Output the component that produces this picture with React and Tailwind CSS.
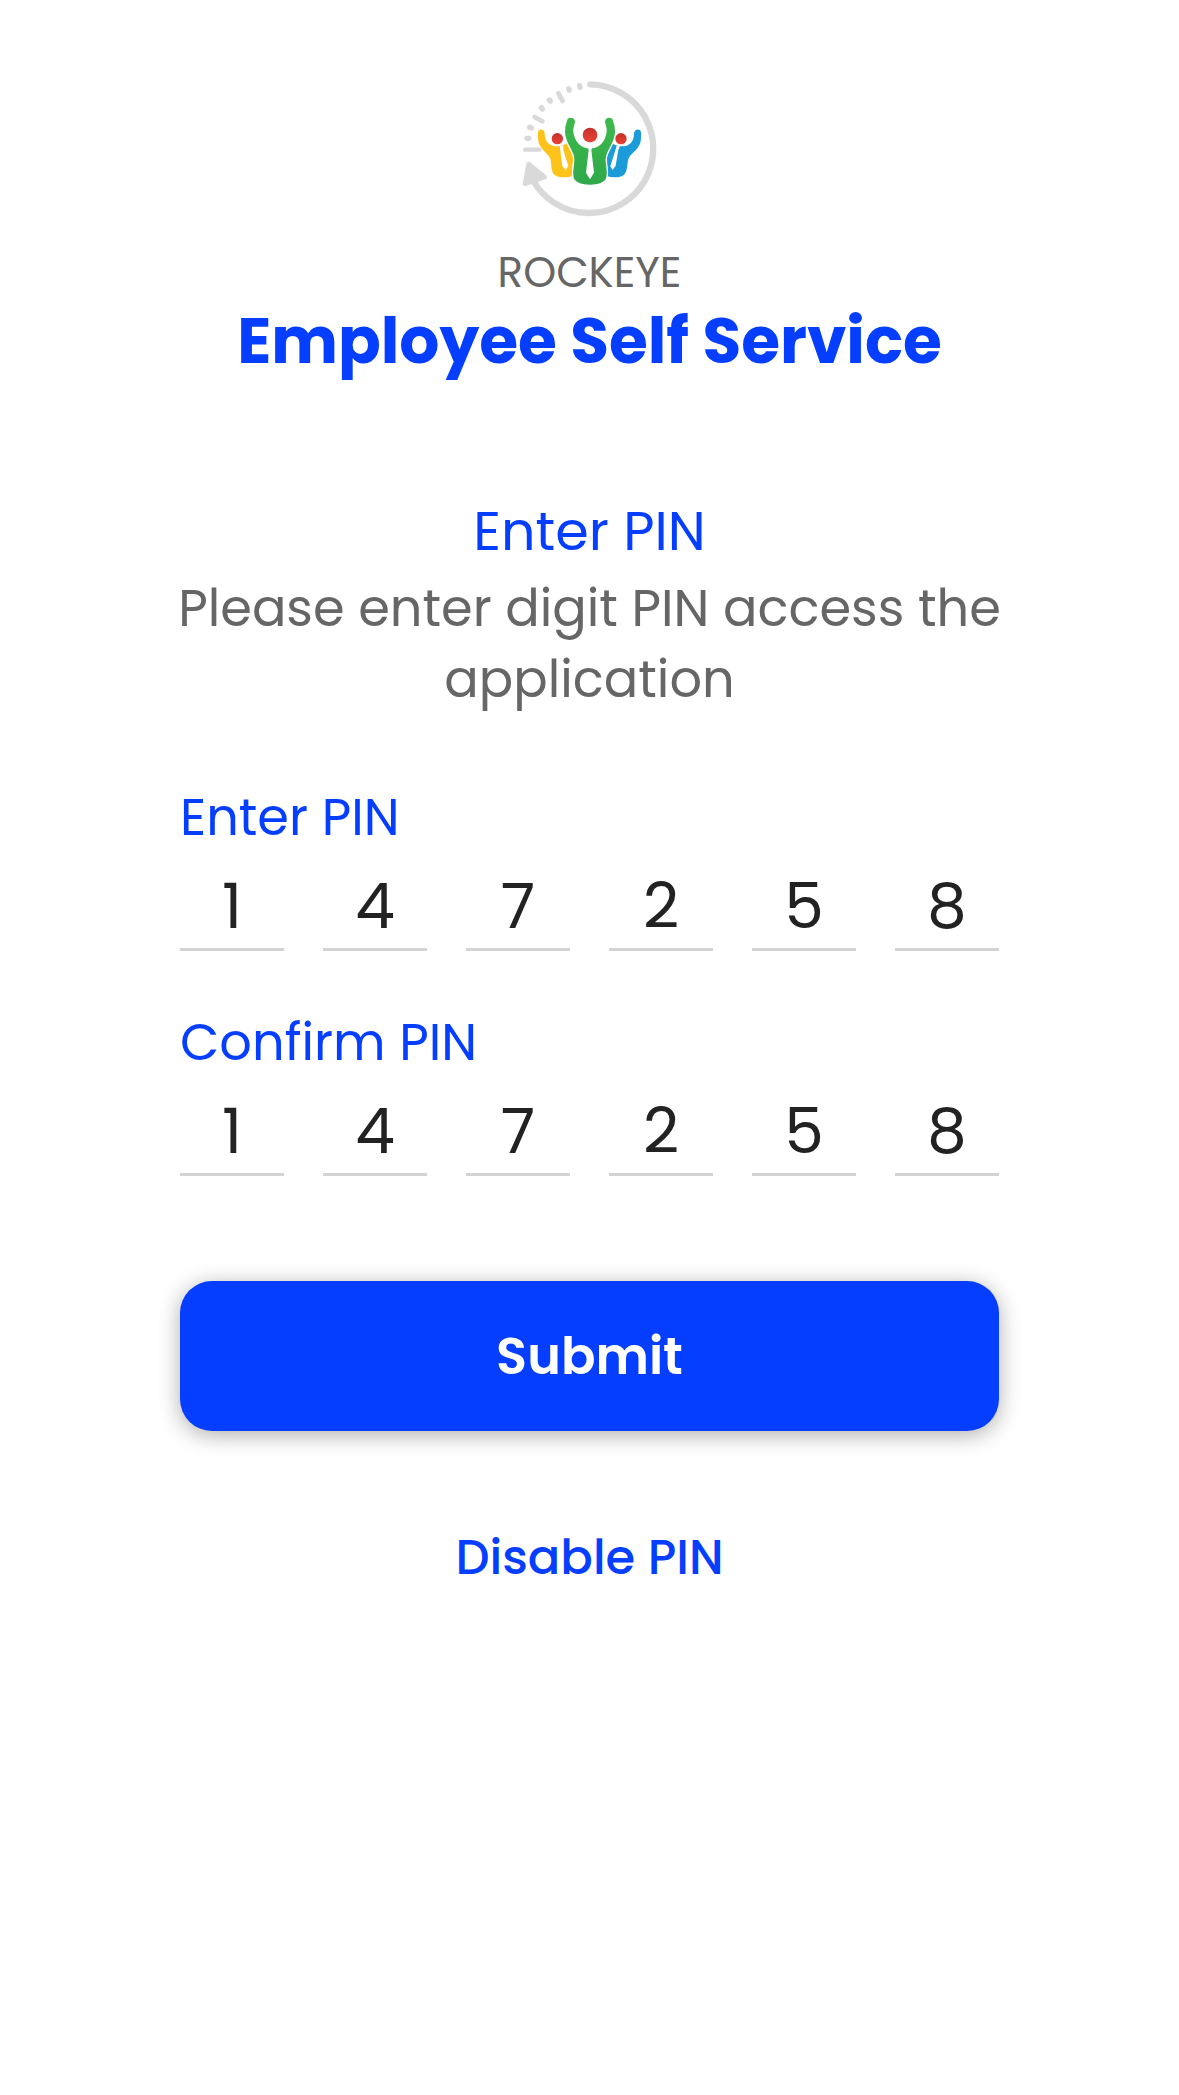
import { useState } from 'react'

const PIN = ['1', '4', '7', '2', '5', '8']

function Logo() {
  return (
    <svg viewBox="0 0 480 465" className="w-[160px] h-[155px]" fill="none" aria-hidden="true">
      <defs>
        <linearGradient id="red" x1="0" y1="0" x2="0" y2="1">
          <stop offset="0" stopColor="#c4302b" />
          <stop offset="1" stopColor="#ea4335" />
        </linearGradient>
        <linearGradient id="green" x1="0" y1="0" x2="0" y2="1">
          <stop offset="0" stopColor="#3fb94c" />
          <stop offset="1" stopColor="#2fa84a" />
        </linearGradient>
      </defs>

      {/* clock ring */}
      <g stroke="#d9d9d9" strokeLinecap="round">
        <path d="M241 43A193 193 0 1 1 70 333" strokeWidth="19" />
        <path d="M46 239H88" strokeWidth="13" />
        <path d="M74 141L97 154M145 70L158 93" strokeWidth="14" />
        <path d="M51 205H56M59 172L64 174M94 113L97 117M118 90L121 93M176 56L178 60M209 47L210 52" strokeWidth="16" />
      </g>
      <path d="M56 282L104 321L45 341Z" fill="#d9d9d9" stroke="#d9d9d9" strokeWidth="14" strokeLinejoin="round" />

      {/* left */}
      <path
        d="M84 189C83 175 104 175 104 190C104 207 111 222 127 227C142 231 160 229 170 220C182 228 190 246 191 264C187 280 187 301 189 317C172 324 145 324 133 314C121 304 126 281 120 265C114 247 84 238 84 204Z"
        fill="#fdc31b"
      />
      <path d="M149 228L160 227L160 240L175 288L167 300L157 288Z" fill="#fff" />
      {/* right */}
      <path
        d="M393 189C394 175 373 175 372 190C372 207 366 222 350 227C335 231 317 229 307 220C296 228 289 246 287 264C292 280 292 301 289 317C306 324 331 324 342 314C354 304 350 281 356 265C363 247 393 238 393 204Z"
        fill="#1b9bd8"
      />
      <path d="M320 228L330 228L325 240L317 287L308 300L301 289Z" fill="#fff" />
      {/* middle */}
      <path
        d="M169 152C171 138 193 137 197 153C198 162 190 171 192 185C195 213 213 233 240 233C267 233 285 213 288 185C290 171 282 162 283 153C287 137 309 138 311 152C315 161 318 171 317 187C316 221 290 242 289 266C288 289 298 310 289 328C276 352 204 352 191 328C182 310 192 289 191 266C190 242 164 221 163 187C162 171 165 161 169 152Z"
        fill="url(#green)"
        stroke="#fff"
        strokeWidth="4"
      />
      <path d="M233 230H247L244 240L252 308L240 328L228 308L236 240Z" fill="#fff" />

      <circle cx="142" cy="206" r="17" fill="url(#red)" />
      <circle cx="333" cy="206" r="17" fill="url(#red)" />
      <circle cx="240" cy="195" r="22" fill="url(#red)" />
    </svg>
  )
}

function PinField({ id, label, value, onChange }) {
  const setDigit = (i, digit) => {
    onChange(value.map((d, n) => (n === i ? digit : d)))
  }

  return (
    <div>
      <label htmlFor={`${id}-0`} className="block text-[51px] leading-[56px] text-[#053eff]">
        {label}
      </label>
      <div className="mt-[18px] grid grid-cols-6 gap-[39px]">
        {value.map((d, i) => (
          <input
            key={i}
            id={`${id}-${i}`}
            aria-label={i === 0 ? undefined : `${label} ${i + 1}`}
            inputMode="numeric"
            maxLength={1}
            value={d}
            onChange={e => setDigit(i, e.target.value)}
            className="w-full h-[88px] border-b-3 border-[#d3d3d3] bg-transparent pt-px text-center text-[63px] text-[#222222] outline-none"
          />
        ))}
      </div>
    </div>
  )
}

export default function App() {
  const [pin, setPin]         = useState(PIN)
  const [confirm, setConfirm] = useState(PIN)

  const handleSubmit = e => {
    e.preventDefault()
  }

  return (
    <main className="min-h-screen bg-white pt-[70px] pb-20 font-['Poppins','Inter',sans-serif]">
      <div className="mx-auto w-full max-w-[819px]">
        <header className="flex flex-col items-center text-center">
          <Logo />
          <p className="mt-6 text-[42px] leading-[48px] text-[#666666]">ROCKEYE</p>
          <h1 className="mt-2 text-[63px] leading-[72px] font-bold text-[#053eff]">
            Employee Self Service
          </h1>
        </header>

        <section className="mt-[122px] text-center">
          <h2 className="text-[54px] leading-[64px] text-[#053eff]">Enter PIN</h2>
          <p className="-mx-2 mt-[10px] text-[51px] leading-[71px] text-[#666666]">
            Please enter digit PIN access the application
          </p>
        </section>

        <form onSubmit={handleSubmit} className="mt-[74px]">
          <div className="space-y-[63px]">
            <PinField id="pin" label="Enter PIN" value={pin} onChange={setPin} />
            <PinField id="confirm" label="Confirm PIN" value={confirm} onChange={setConfirm} />
          </div>
          <button
            type="submit"
            className="mt-[105px] w-full h-[150px] rounded-[32px] bg-[#053eff] text-[51px] font-semibold text-white shadow-[0_4px_22px_rgba(0,0,0,0.32)]"
          >
            Submit
          </button>
          <button
            type="button"
            className="mx-auto mt-[99px] block text-[48px] leading-[56px] font-medium text-[#053eff]"
          >
            Disable PIN
          </button>
        </form>
      </div>
    </main>
  )
}
